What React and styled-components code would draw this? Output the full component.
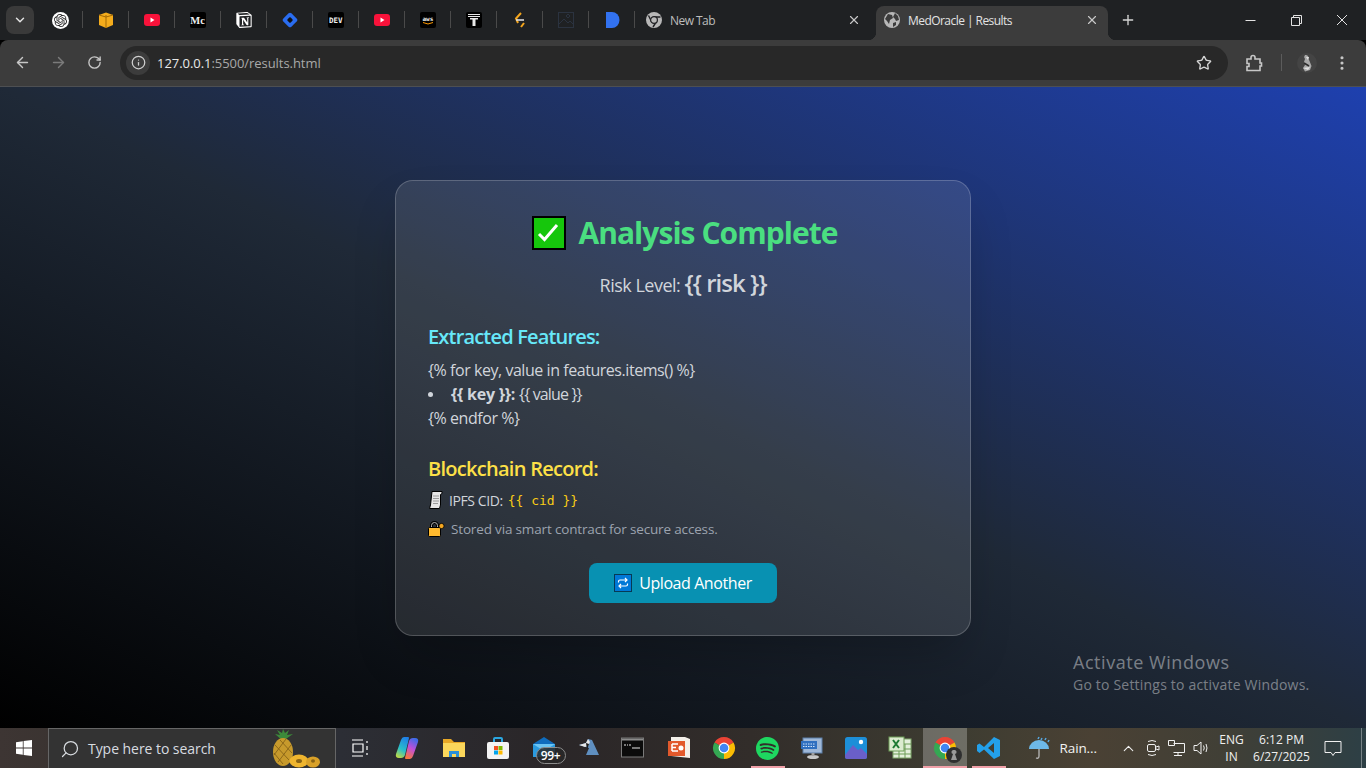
import React from 'react'
import styled, { createGlobalStyle } from 'styled-components'
import {
  ArrowLeft,
  ArrowRight,
  ChevronDown,
  ChevronUp,
  EllipsisVertical,
  Info,
  Plus,
  RotateCw,
  Search,
  Star,
  X,
} from 'lucide-react'
import { SiNotion, SiOpenai, SiSpotify } from 'react-icons/si'

const FONT = '"Open Sans", "Noto Sans", "Liberation Sans", sans-serif'

const GlobalStyle = createGlobalStyle`
  html, body, #root { margin: 0; padding: 0; height: 100%; }
  body { font-family: ${FONT}; overflow: hidden; background: #000; }
  * { box-sizing: border-box; }
`

const Screen = styled.div`
  width: 1366px;
  height: 768px;
  display: flex;
  flex-direction: column;
`

/* ---- browser chrome ---- */
const TabStrip = styled.div`
  height: 40px;
  flex: none;
  display: flex;
  align-items: flex-end;
  background: #1f2123;
  padding-left: 6px;
  color: #c7c7c7;
`
const TabSearch = styled.div`
  width: 28px;
  height: 28px;
  margin: 0 3px 6px 0;
  border-radius: 8px;
  background: #3a3a3a;
  display: flex;
  align-items: center;
  justify-content: center;
  color: #e3e3e3;
`
const PinnedTab = styled.div`
  width: 46px;
  height: 34px;
  display: flex;
  align-items: center;
  justify-content: center;
  position: relative;
  padding-bottom: 6px;
  &::after {
    content: '';
    position: absolute;
    right: 0;
    top: 5px;
    width: 1px;
    height: 17px;
    background: #4a4a4a;
  }
`
const Tab = styled.div`
  height: 34px;
  width: ${p => p.$width}px;
  display: flex;
  align-items: center;
  padding: 0 ${p => p.$right}px 6px ${p => p.$left}px;
  position: relative;
  border-radius: 8px 8px 0 0;
  background: ${p => (p.$active ? '#3c3c3c' : 'transparent')};
  ${p =>
    p.$active &&
    `
    &::before, &::after {
      content: '';
      position: absolute;
      bottom: 0;
      width: 8px;
      height: 8px;
    }
    &::before { left: -8px; background: radial-gradient(circle at 0 0, transparent 8px, #3c3c3c 8.5px); }
    &::after { right: -8px; background: radial-gradient(circle at 100% 0, transparent 8px, #3c3c3c 8.5px); }
  `}
`
const TabTitle = styled.span`
  flex: 1;
  margin-left: 8px;
  font-size: 12px;
  letter-spacing: -0.55px;
  color: ${p => (p.$active ? '#e3e3e3' : '#bdbdbd')};
  white-space: nowrap;
`
const NewTab = styled.div`
  width: 40px;
  height: 34px;
  padding-bottom: 6px;
  display: flex;
  align-items: center;
  justify-content: center;
  color: #d6d6d6;
`
const WindowControls = styled.div`
  margin-left: auto;
  padding-right: 1px;
  display: flex;
  align-self: stretch;
`
const WindowButton = styled.div`
  width: 46px;
  display: flex;
  align-items: center;
  justify-content: center;
  color: #e3e3e3;
`
const Toolbar = styled.div`
  height: 47px;
  flex: none;
  display: flex;
  align-items: center;
  padding: 0 6px 1px 4px;
  background: #3c3c3c;
  border-radius: 8px 8px 0 0;
  border-bottom: 1px solid #4d4f52;
  color: #c7c7c7;
`
const NavButton = styled.div`
  width: 36px;
  height: 36px;
  flex: none;
  display: flex;
  align-items: center;
  justify-content: center;
  color: ${p => (p.$off ? '#7b7b7b' : '#c7c7c7')};
`
const Omnibox = styled.div`
  flex: 1;
  height: 34px;
  margin: 0 8px;
  border-radius: 17px;
  background: #282828;
  display: flex;
  align-items: center;
  padding: 0 16px 0 6px;
`
const SiteInfo = styled.div`
  width: 24px;
  height: 24px;
  border-radius: 50%;
  background: #3c3c3c;
  display: flex;
  align-items: center;
  justify-content: center;
  color: #d0d0d0;
`
const Url = styled.div`
  flex: 1;
  margin-left: 7px;
  font-size: 13px;
  letter-spacing: -0.05px;
  color: #a8a8a8;
  b { font-weight: 400; color: #e8e8e8; }
`
const ToolbarDivider = styled.div`
  width: 1px;
  height: 17px;
  margin: 0 8px 0 9px;
  background: #5c5c5c;
`
const Avatar = styled.div`
  width: 34px;
  display: flex;
  justify-content: center;
`

/* ---- page ---- */
const Page = styled.main`
  flex: 1;
  min-height: 0;
  position: relative;
  display: flex;
  justify-content: center;
  padding-top: 93px;
  background: linear-gradient(to top right, #000 0%, #1f2937 50%, #1e40af 100%);
`
const Card = styled.section`
  width: 576px;
  height: 456px;
  padding: 32px;
  border: 1px solid rgba(255, 255, 255, 0.2);
  border-radius: 18px;
  background: rgba(255, 255, 255, 0.1);
  box-shadow: 0 25px 50px -12px rgba(0, 0, 0, 0.25);
  color: #d1d5db;
`
const Title = styled.h1`
  margin: 2px 0 17px;
  padding-left: 4px;
  height: 36px;
  display: flex;
  align-items: center;
  justify-content: center;
  gap: 12px;
  font-size: 30px;
  line-height: 36px;
  font-weight: 700;
  letter-spacing: -0.95px;
  color: #4ade80;
`
const Risk = styled.p`
  margin: 0 0 23px;
  height: 32px;
  text-align: center;
  font-size: 18px;
  line-height: 30px;
  letter-spacing: -0.5px;
  color: #d1d5db;
  strong { font-size: 24px; font-weight: 600; letter-spacing: -1px; }
`
const SectionHeading = styled.h2`
  margin: 0;
  font-size: 20px;
  line-height: 28px;
  font-weight: 600;
  letter-spacing: ${p => p.$tracking}px;
  color: ${p => p.$color};
`
const TemplateList = styled.div`
  margin: 7px 0 25px;
  font-size: 16px;
  line-height: 24px;
  letter-spacing: -0.45px;
`
const BulletRow = styled.div`
  display: flex;
  align-items: center;
  strong { font-weight: 700; margin-right: 4px; letter-spacing: -0.25px; }
  span { letter-spacing: -0.85px; }
  &::before {
    content: '';
    width: 5px;
    height: 5px;
    margin-right: 18px;
    border-radius: 50%;
    background: #d1d5db;
  }
`
const CidRow = styled.div`
  margin-top: 5px;
  height: 24px;
  display: flex;
  align-items: center;
  font-size: 14px;
  letter-spacing: -0.42px;
  color: #d1d5db;
`
const Cid = styled.code`
  margin-left: 5px;
  font-family: "DejaVu Sans Mono", "Liberation Mono", monospace;
  font-size: 13px;
  letter-spacing: 0;
  color: #facc15;
`
const StoredRow = styled.div`
  margin-top: 7px;
  height: 20px;
  display: flex;
  align-items: center;
  font-size: 13.5px;
  letter-spacing: -0.16px;
  color: #9ca3af;
`
const UploadButton = styled.button`
  display: flex;
  align-items: center;
  justify-content: center;
  gap: 7px;
  width: 188px;
  height: 40px;
  margin: 24px auto 0;
  border: 0;
  border-radius: 8px;
  background: #0891b2;
  color: #fff;
  font-family: ${FONT};
  font-size: 16px;
  letter-spacing: -0.42px;
`
const EmojiSlot = styled.span`
  display: inline-flex;
  flex: none;
  margin-right: ${p => p.$gap || 0}px;
`
const Watermark = styled.div`
  position: absolute;
  left: 1073px;
  top: 562px;
  color: rgba(255, 255, 255, 0.42);
  font-size: 14px;
  line-height: 20px;
  letter-spacing: 0.2px;
  div:first-child { font-size: 18px; line-height: 26px; letter-spacing: 0.55px; }
`

/* ---- taskbar ---- */
const Taskbar = styled.footer`
  height: 40px;
  flex: none;
  display: flex;
  align-items: stretch;
  color: #fff;
  background: linear-gradient(90deg, #3d3533 0%, #38322f 8%, #2c2e35 25%, #2a2628 40%, #322d2a 55%, #3d3c31 70%, #4a4134 80%, #403f36 90%, #2d3f45 100%);
`
const StartButton = styled.div`
  width: 48px;
  display: flex;
  align-items: center;
  justify-content: center;
`
const SearchBox = styled.div`
  width: 288px;
  margin-right: 2px;
  display: flex;
  align-items: center;
  padding-left: 11px;
  background: #333;
  border: 1px solid #666;
  border-bottom: 0;
  font-size: 14px;
  letter-spacing: -0.05px;
  color: #d8dce0;
  position: relative;
  span { margin-left: 8px; }
  svg:last-child { position: absolute; left: 223px; top: 0; }
`
const AppSlot = styled.div`
  width: 44px;
  flex: none;
  display: flex;
  align-items: center;
  justify-content: center;
  position: relative;
  margin-left: ${p => p.$offset || 0}px;
  background: ${p => (p.$active ? 'rgba(255,255,255,0.25)' : 'transparent')};
  ${p =>
    p.$running &&
    `&::after {
      content: '';
      position: absolute;
      left: ${p.$active ? 0 : 5}px;
      right: ${p.$active ? 0 : 5}px;
      bottom: 0;
      height: 2px;
      background: #f0a0a8;
    }`}
`
const Weather = styled.div`
  width: 89px;
  margin-left: 17px;
  display: flex;
  align-items: center;
  gap: 8px;
  font-size: 13.5px;
  letter-spacing: -0.1px;
  color: #f2f2f2;
`
const Tray = styled.div`
  width: ${p => p.$width || 24}px;
  flex: none;
  display: flex;
  align-items: center;
  justify-content: center;
  color: #f0f0f0;
`
const TrayText = styled.div`
  width: ${p => p.$width}px;
  flex: none;
  display: flex;
  flex-direction: column;
  align-items: center;
  justify-content: center;
  font-size: 12px;
  line-height: 17px;
  letter-spacing: 0;
  color: #f0f0f0;
  white-space: nowrap;
`
const ShowDesktop = styled.div`
  margin-left: auto;
  width: 5px;
  border-left: 1px solid rgba(255, 255, 255, 0.35);
`
const OpenAiBadge = styled.span`
  width: 17px;
  height: 17px;
  border-radius: 50%;
  background: #fff;
  color: #222;
  display: flex;
  align-items: center;
  justify-content: center;
`

/* ---- drawings ---- */
const Tile = ({ bg, r = 2, children }) => (
  <svg width="16" height="16" viewBox="0 0 16 16">
    <rect width="16" height="16" rx={r} fill={bg} />
    {children}
  </svg>
)

const Globe = ({ color }) => (
  <svg width="16" height="16" viewBox="0 0 16 16">
    <circle cx="8" cy="8" r="8" fill={color} />
    <path d="M4 2l4 1 1 3-3 2-1 4-2-3-2-2zM11 1l3 3 1 4-3 1-1-2-2-2zM9 11l3-1 0 3-3 2z" fill="#3c3c3c" />
  </svg>
)

const Chrome = ({ size = 24 }) => (
  <svg width={size} height={size} viewBox="0 0 24 24">
    <path d="M12 12L2.470 6.500A11 11 0 0 1 21.530 6.500z" fill="#ea4335" />
    <path d="M12 12L21.530 6.500A11 11 0 0 1 12 23z" fill="#fbbc04" />
    <path d="M12 12L12 23A11 11 0 0 1 2.470 6.500z" fill="#34a853" />
    <circle cx="12" cy="12" r="5.400" fill="#fff" />
    <circle cx="12" cy="12" r="4.300" fill="#4285f4" />
  </svg>
)

const ChromeFavicon = () => (
  <svg width="16" height="16" viewBox="0 0 16 16">
    <circle cx="8" cy="8" r="8" fill="#b8b8b8" />
    <path d="M8 5h6.500M5.500 9.500L2.500 3.500M10.500 9.500L7 15" stroke="#202124" strokeWidth="1.400" />
    <circle cx="8" cy="8" r="3.400" fill="#b8b8b8" stroke="#202124" strokeWidth="1.200" />
  </svg>
)

const CheckEmoji = () => (
  <svg width="34" height="34" viewBox="0 0 34 34">
    <rect x="1" y="1" width="32" height="32" fill="#16c60c" stroke="#000" strokeWidth="2" />
    <path d="M7 18l5.500 5.500L25 9" fill="none" stroke="#fff" strokeWidth="3" />
  </svg>
)

const ScrollEmoji = () => (
  <svg width="15" height="18" viewBox="0 0 15 18">
    <path d="M4 0.500h10v2l-1.500 1v10.500l-1 3.500H1.500l1-3.500z" fill="#e6e6e6" stroke="#000" />
    <path d="M5 5h6M5 7.500h6M5 10h6M5 12.500h5" stroke="#9a9a9a" />
  </svg>
)

const LockEmoji = () => (
  <svg width="17" height="16" viewBox="0 0 17 16">
    <path d="M3.500 7V4.500a3 3 0 0 1 6 0V7" fill="none" stroke="#000" strokeWidth="3" />
    <path d="M3.500 6V4.500a3 3 0 0 1 6 0V6" fill="none" stroke="#b8b8b8" strokeWidth="1" />
    <rect x="0.500" y="6.500" width="12" height="9" rx="1" fill="#ffb92e" stroke="#000" />
    <circle cx="13.500" cy="5" r="2.600" fill="#f6a821" stroke="#000" strokeWidth="0.800" />
  </svg>
)

const RepeatEmoji = () => (
  <svg width="18" height="18" viewBox="0 0 18 18">
    <rect x="0.500" y="0.500" width="17" height="17" fill="#0078d7" stroke="#063a55" />
    <path d="M4.500 8.500V7.500q0-1.500 1.500-1.500h6.500M11 4l2 2-2 2M13.500 9.500v1q0 1.500-1.500 1.500H5.500M7 14l-2-2 2-2" fill="none" stroke="#fff" strokeWidth="1.200" />
  </svg>
)

const Pineapple = () => (
  <svg width="52" height="39" viewBox="0 0 52 39">
    <path d="M11 12L3 5l5 1-3-5 5 3 1-4 2 4 4-3-2 5 6-1z" fill="#3c8a3a" />
    <ellipse cx="11" cy="23" rx="10" ry="14" fill="#c79a2c" />
    <path d="M3 16l14 15M2 24l9 11M8 11l12 13M19 16L6 33M14 10L2 26" stroke="#7d5c14" strokeWidth="0.800" />
    <ellipse cx="27" cy="32" rx="9.500" ry="6.500" fill="#efb52e" />
    <ellipse cx="27" cy="32" rx="3" ry="2" fill="#8a6414" />
    <ellipse cx="41" cy="33" rx="7" ry="5.500" fill="#d9a128" />
    <ellipse cx="41" cy="32" rx="2" ry="1.800" fill="#8a6414" />
  </svg>
)

const WindowsLogo = () => (
  <svg width="16" height="16" viewBox="0 0 16 16" fill="#fff">
    <path d="M0 2.200l6.800-1v6.400H0zM7.600 1.100L16 0v7.600H7.600zM0 8.400h6.800v6.400l-6.800-1zM7.600 8.400H16V16l-8.400-1.100z" />
  </svg>
)

const Icon24 = ({ children }) => (
  <svg width="24" height="24" viewBox="0 0 24 24">
    {children}
  </svg>
)

const ProfileBadge = styled.span`
  position: absolute;
  left: 23px;
  top: 19px;
  display: flex;
`
const MailBadge = styled.span`
  position: absolute;
  left: 14px;
  top: 19px;
  width: 30px;
  height: 17px;
  border-radius: 9px;
  border: 1px solid #8c8c8c;
  background: rgba(40, 40, 40, 0.85);
  font-size: 12px;
  font-weight: 600;
  line-height: 15px;
  text-align: center;
  letter-spacing: -0.3px;
`

function ProfileDot() {
  return (
    <ProfileBadge>
      <svg width="16" height="16" viewBox="0 0 16 16">
        <circle cx="8" cy="8" r="8" fill="#2f2f2f" />
        <path d="M8 3a2 2 0 0 1 1 4l2 6H5l2-6a2 2 0 0 1 1-4z" fill="#9a9a9a" />
      </svg>
    </ProfileBadge>
  )
}

const MailIcon = () => (
  <svg width="24" height="24" viewBox="0 0 24 24">
    <path d="M1 8l11-7 11 7z" fill="#0f6cbd" />
    <rect x="1" y="8" width="22" height="13" fill="#2a9be0" />
    <path d="M1 8l11 7 11-7" fill="#6cc4f2" />
  </svg>
)

const taskbarApps = [
  {
    id: 'copilot',
    offset: 3,
    icon: (
      <Icon24>
        <defs>
          <linearGradient id="copilotLeft" x1="0.700" y1="0" x2="0.300" y2="1">
            <stop offset="0" stopColor="#1f7fe8" />
            <stop offset="0.600" stopColor="#29c0c8" />
            <stop offset="1" stopColor="#b8d84a" />
          </linearGradient>
          <linearGradient id="copilotRight" x1="0.700" y1="0" x2="0.300" y2="1">
            <stop offset="0" stopColor="#3a6ce8" />
            <stop offset="0.500" stopColor="#c04fd8" />
            <stop offset="1" stopColor="#f8783c" />
          </linearGradient>
        </defs>
        <path d="M9 1h4q1 0 1 1L10 19q-1 3-4 3H4q-4 0-3-4L6 4q1-3 3-3z" fill="url(#copilotLeft)" />
        <path d="M15 23h-4q-1 0-1-1L14 5q1-3 4-3h2q4 0 3 4l-5 14q-1 3-3 3z" fill="url(#copilotRight)" />
      </Icon24>
    ),
  },
  {
    id: 'explorer',
    offset: 2.5,
    icon: (
      <Icon24>
        <path d="M1 3h8l3 3h11v15H1z" fill="#e8a826" />
        <rect x="1" y="7" width="22" height="14" fill="#fbd75b" />
        <path d="M7 21v-6h10v6h-3v-3h-4v3z" fill="#2b8fd8" />
      </Icon24>
    ),
  },
  {
    id: 'store',
    icon: (
      <Icon24>
        <path d="M8 6V3q0-1 1-1h6q1 0 1 1v3" fill="none" stroke="#2aa6e0" strokeWidth="2" />
        <rect x="1" y="6" width="22" height="17" rx="2" fill="#f3f3f3" />
        <rect x="8" y="10" width="4" height="4" fill="#f25022" />
        <rect x="12.500" y="10" width="4" height="4" fill="#7fba00" />
        <rect x="8" y="14.500" width="4" height="4" fill="#00a4ef" />
        <rect x="12.500" y="14.500" width="4" height="4" fill="#ffb900" />
      </Icon24>
    ),
  },
  { id: 'mail', offset: 2, badge: true },
  {
    id: 'bird',
    offset: 1,
    icon: (
      <Icon24>
        <path d="M2 9l7-2 2-4 4 1 7 15H9l3-7z" fill="#5f8fc0" />
        <path d="M2 9l7-2 2-4 2 3-2 4-3 1z" fill="#e6e6e6" />
        <path d="M9 7l3 1-2 6z" fill="#1b1b1b" />
      </Icon24>
    ),
  },
  {
    id: 'cmd',
    icon: (
      <Icon24>
        <rect x="0.500" y="2" width="22" height="19" fill="#0b0b0b" stroke="#7a7a7a" />
        <rect x="1" y="2.500" width="21" height="2" fill="#8c8c8c" />
        <path d="M3 9h2M6 9h1M8 9h2M11 12h8" stroke="#e8e8e8" strokeWidth="1.200" />
      </Icon24>
    ),
  },
  {
    id: 'ppt',
    offset: 2,
    icon: (
      <Icon24>
        <path d="M4 1h14l5 2v19l-19-2z" fill="#f4f0ea" />
        <rect x="1" y="5" width="17" height="15" fill="#e2592c" />
        <path d="M5 8h6M5 11.500h4M5 15h6M5 8v7" stroke="#fff" strokeWidth="1.500" fill="none" />
        <circle cx="14" cy="12" r="2.500" fill="#fff" />
      </Icon24>
    ),
  },
  { id: 'chrome', offset: 1, icon: <Chrome /> },
  { id: 'spotify', running: true, icon: <SiSpotify size={23} color="#1ed760" /> },
  {
    id: 'monitor',
    icon: (
      <Icon24>
        <rect x="3" y="2" width="19" height="15" fill="#9fb8d8" stroke="#5c7fa8" />
        <rect x="1" y="5" width="16" height="8" fill="#2f6fc0" />
        <path d="M3 8h12M3 10.500h12" stroke="#cfe2f8" strokeDasharray="1.500 1" />
        <ellipse cx="13" cy="21" rx="6" ry="2" fill="#c8c8c8" />
        <rect x="11.500" y="17" width="3" height="3" fill="#a0a0a0" />
      </Icon24>
    ),
  },
  {
    id: 'photos',
    icon: (
      <Icon24>
        <rect x="1" y="1" width="22" height="22" rx="2.500" fill="#1d8fd8" />
        <path d="M1 19l8-10 5 5 3-2 6 6v2.500q0 2.500-2.500 2.500h-17Q1 23 1 20.500z" fill="#6a5fc8" />
        <circle cx="17" cy="6" r="2.200" fill="#fff" />
      </Icon24>
    ),
  },
  {
    id: 'excel',
    icon: (
      <Icon24>
        <rect x="5" y="3" width="18" height="19" fill="#e4f0dc" stroke="#7fa86a" />
        <path d="M5 8h18M5 13h18M5 18h18M11 8v14M17 8v14" stroke="#6d9c56" />
        <rect x="1" y="1" width="15" height="14" fill="#dcebd0" stroke="#6d9c56" />
        <path d="M5 4l6 8M11 4l-6 8" stroke="#1f7a35" strokeWidth="2" />
      </Icon24>
    ),
  },
  {
    id: 'chrome-active',
    offset: 1,
    active: true,
    running: true,
    icon: (
      <>
        <Chrome />
        <ProfileDot />
      </>
    ),
  },
  {
    id: 'vscode',
    running: true,
    icon: (
      <Icon24>
        <path d="M17 1l6 3v16l-6 3-10-9.500-4.500 3.500L0 15V9l2.500-1.500L7 11zM17 7l-6 5 6 5z" fill="#23a0ea" />
      </Icon24>
    ),
  },
]

function YouTube() {
  return (
    <svg width="16" height="16" viewBox="0 0 16 16">
      <rect x="0" y="2" width="16" height="12" rx="3" fill="#f8123a" />
      <path d="M6.500 5.500v5l4-2.500z" fill="#fff" />
    </svg>
  )
}

function TileText({ x, y, size, font = 'DejaVu Sans Mono', children }) {
  return (
    <text x={x} y={y} fontSize={size} fontFamily={font} fontWeight="700" fill="#f0f0f0">
      {children}
    </text>
  )
}

const pinnedIcons = [
  {
    id: 'openai',
    icon: (
      <OpenAiBadge>
        <SiOpenai size={13} />
      </OpenAiBadge>
    ),
  },
  {
    id: 'box',
    icon: (
      <svg width="16" height="16" viewBox="0 0 16 16">
        <path d="M1 3l7-2.500L15 3v10l-7 3-7-3z" fill="#f4ac1c" />
        <path d="M8 3v13M1 3l7 2 7-2" stroke="#a36a05" fill="none" />
      </svg>
    ),
  },
  { id: 'yt1', icon: <YouTube /> },
  {
    id: 'medium',
    icon: (
      <Tile bg="#000">
        <TileText x="0.300" y="12" size="10.500" font="Liberation Serif">Mc</TileText>
      </Tile>
    ),
  },
  { id: 'notion', icon: <SiNotion size={16} color="#fff" /> },
  {
    id: 'diamond',
    icon: (
      <svg width="16" height="16" viewBox="0 0 16 16">
        <rect x="2.300" y="2.300" width="11.400" height="11.400" rx="2" transform="rotate(45 8 8)" fill="#2a6df0" />
        <rect x="5.800" y="5.800" width="4.400" height="4.400" rx="1" transform="rotate(45 8 8)" fill="#111" />
      </svg>
    ),
  },
  {
    id: 'dev',
    icon: (
      <Tile bg="#000">
        <TileText x="1" y="11" size="7.500">DEV</TileText>
      </Tile>
    ),
  },
  { id: 'yt2', icon: <YouTube /> },
  {
    id: 'aws',
    icon: (
      <Tile bg="#000">
        <TileText x="2.500" y="8.500" size="6">aws</TileText>
        <path d="M3 10.500q5 3 10 0" stroke="#f90" fill="none" />
      </Tile>
    ),
  },
  {
    id: 'tf',
    icon: (
      <Tile bg="#000">
        <path d="M2 2h12v1H2zM2 4h12v1H2zM6.500 6h3v8h-3zM4 6h8v1.500H4z" fill="#e8e8e8" />
      </Tile>
    ),
  },
  {
    id: 'slash',
    icon: (
      <svg width="16" height="16" viewBox="0 0 16 16">
        <path d="M9 1L4 6.500 6 11" stroke="#f4a51c" fill="none" strokeWidth="2" />
        <path d="M4 8h8" stroke="#dcdcdc" strokeWidth="1.600" />
        <path d="M12 11l-3 4" stroke="#f4a51c" strokeWidth="2" />
      </svg>
    ),
  },
  {
    id: 'faded',
    icon: (
      <svg width="16" height="16" viewBox="0 0 16 16">
        <rect x="0.500" y="0.500" width="15" height="15" fill="none" stroke="#2b3340" />
        <path d="M1 12l5-5 4 4 2-2 3 3M10 2l2 2-2 2-2-2z" stroke="#2b3340" fill="none" />
      </svg>
    ),
  },
  {
    id: 'docs',
    icon: (
      <svg width="16" height="16" viewBox="0 0 16 16">
        <path d="M2 0h6a7.500 8 0 0 1 0 16H2z" fill="#3272f0" />
      </svg>
    ),
  },
]

const App = () => (
  <Screen>
    <GlobalStyle />
    <TabStrip>
      <TabSearch>
        <ChevronDown size={14} strokeWidth={2.500} />
      </TabSearch>
      {pinnedIcons.map(p => (
        <PinnedTab key={p.id}>{p.icon}</PinnedTab>
      ))}
      <Tab $width={241} $left={11} $right={15}>
        <ChromeFavicon />
        <TabTitle>New Tab</TabTitle>
        <X size={14} strokeWidth={2} />
      </Tab>
      <Tab $width={232} $left={8} $right={9} $active>
        <Globe color="#b8b8b8" />
        <TabTitle $active>MedOracle | Results</TabTitle>
        <X size={14} strokeWidth={2} />
      </Tab>
      <NewTab>
        <Plus size={16} strokeWidth={2} />
      </NewTab>
      <WindowControls>
        <WindowButton>
          <svg width="11" height="11" viewBox="0 0 11 11"><path d="M0.500 5.500h10" stroke="currentColor" /></svg>
        </WindowButton>
        <WindowButton>
          <svg width="11" height="11" viewBox="0 0 11 11"><path d="M0.500 2.500h8v8h-8zM2.500 2.500v-2h8v8h-2" fill="none" stroke="currentColor" /></svg>
        </WindowButton>
        <WindowButton>
          <svg width="12" height="12" viewBox="0 0 12 12"><path d="M1 1l10 10M11 1L1 11" stroke="currentColor" /></svg>
        </WindowButton>
      </WindowControls>
    </TabStrip>

    <Toolbar>
      <NavButton><ArrowLeft size={17} /></NavButton>
      <NavButton $off><ArrowRight size={17} /></NavButton>
      <NavButton><RotateCw size={15} strokeWidth={2.200} /></NavButton>
      <Omnibox>
        <SiteInfo><Info size={15} /></SiteInfo>
        <Url><b>127.0.0.1</b>:5500/results.html</Url>
        <Star size={16} strokeWidth={2} color="#d6d6d6" />
      </Omnibox>
      <NavButton>
        <svg width="18" height="18" viewBox="0 0 18 18">
          <path d="M2 5h4V3.500a2 2 0 0 1 4 0V5h5v4h1.500v3H15v4.500H2v-4h2v-3H2z" fill="none" stroke="currentColor" strokeWidth="1.600" />
        </svg>
      </NavButton>
      <ToolbarDivider />
      <Avatar>
        <svg width="20" height="22" viewBox="0 0 20 22">
          <circle cx="10" cy="11" r="10" fill="#444" />
          <path d="M8 3a3 3 0 0 1 3.500 4l1 2 2 5-1.500 4-5 1.500-2-3.500 2-3-1-3 1-3A3 3 0 0 1 8 3z" fill="#a8a8a8" />
          <path d="M9 5h3l-1 3zM6 16l5 2 2-3" fill="#e0e0e0" />
          <path d="M7 11l5 3" stroke="#2c2c2c" strokeWidth="1.500" />
        </svg>
      </Avatar>
      <NavButton><EllipsisVertical size={18} strokeWidth={2.200} /></NavButton>
    </Toolbar>

    <Page>
      <Card>
        <Title>
          <CheckEmoji />
          Analysis Complete
        </Title>
        <Risk>Risk Level: <strong>{'{{ risk }}'}</strong></Risk>
        <SectionHeading $color="#67e8f9" $tracking={-0.82}>Extracted Features:</SectionHeading>
        <TemplateList>
          <div>{'{% for key, value in features.items() %}'}</div>
          <BulletRow><strong>{'{{ key }}:'}</strong><span>{'{{ value }}'}</span></BulletRow>
          <div>{'{% endfor %}'}</div>
        </TemplateList>
        <SectionHeading $color="#fde047" $tracking={-0.72}>Blockchain Record:</SectionHeading>
        <CidRow>
          <EmojiSlot $gap={6}><ScrollEmoji /></EmojiSlot>
          IPFS CID: <Cid>{'{{ cid }}'}</Cid>
        </CidRow>
        <StoredRow>
          <EmojiSlot $gap={6}><LockEmoji /></EmojiSlot>
          Stored via smart contract for secure access.
        </StoredRow>
        <UploadButton>
          <RepeatEmoji />
          Upload Another
        </UploadButton>
      </Card>
      <Watermark>
        <div>Activate Windows</div>
        <div>Go to Settings to activate Windows.</div>
      </Watermark>
    </Page>

    <Taskbar>
      <StartButton><WindowsLogo /></StartButton>
      <SearchBox>
        <Search size={20} strokeWidth={1.500} style={{ transform: 'scaleX(-1)' }} />
        <span>Type here to search</span>
        <Pineapple />
      </SearchBox>
      <AppSlot>
        <svg width="18" height="18" viewBox="0 0 18 18" fill="none" stroke="#fff" strokeWidth="1.200">
          <path d="M1 1h11M1 17h11M2 5h10v8H2zM16 2v2M16 7v4M16 14v2" />
        </svg>
      </AppSlot>
      {taskbarApps.map(app => (
        <AppSlot key={app.id} $active={app.active} $running={app.running} $offset={app.offset}>
          {app.badge ? (
            <>
              <MailIcon />
              <MailBadge>99+</MailBadge>
            </>
          ) : (
            app.icon
          )}
        </AppSlot>
      ))}
      <Weather>
        <svg width="24" height="26" viewBox="0 0 24 26">
          <path d="M1 14a10 9 0 0 1 20 0z" fill="#6db8e8" />
          <path d="M11 14v7q0 3-3 2" stroke="#b8b8b8" fill="none" strokeWidth="1.300" />
          <path d="M14 3l-1 2M18 3l-1 2M21 5l-1 2M11 2l-1 2" stroke="#58a8e0" strokeWidth="1.500" />
        </svg>
        Rain...
      </Weather>
      <Tray><ChevronUp size={17} strokeWidth={1.500} /></Tray>
      <Tray>
        <svg width="16" height="18" viewBox="0 0 16 18" fill="none" stroke="currentColor">
          <rect x="2.500" y="5.500" width="8" height="7" rx="1.500" />
          <path d="M11 8l3-1v4l-3-1M3 2.500q4-2 8 0M3 15.500q4 2 8 0" />
        </svg>
      </Tray>
      <Tray>
        <svg width="17" height="16" viewBox="0 0 17 16" fill="none" stroke="currentColor">
          <path d="M5.500 3.500h11v9h-11M10 12.500v2.500M6 15.500h8M0.500 0.500h6v5h-6z" />
        </svg>
      </Tray>
      <Tray>
        <svg width="16" height="14" viewBox="0 0 16 14" fill="none" stroke="currentColor">
          <path d="M1 4.500h3L8 1v12L4 9.500H1zM10.500 4.500q1.500 2.500 0 5M13 3q2 4 0 8" />
        </svg>
      </Tray>
      <TrayText $width={38}><span>ENG</span><span>IN</span></TrayText>
      <TrayText $width={62}><span>6:12 PM</span><span>6/27/2025</span></TrayText>
      <Tray $width={40}>
        <svg width="18" height="17" viewBox="0 0 18 17" fill="none" stroke="currentColor">
          <path d="M1 1.500h16v11h-6l-2 3-2-3H1z" />
        </svg>
      </Tray>
      <ShowDesktop />
    </Taskbar>
  </Screen>
)

export default App
